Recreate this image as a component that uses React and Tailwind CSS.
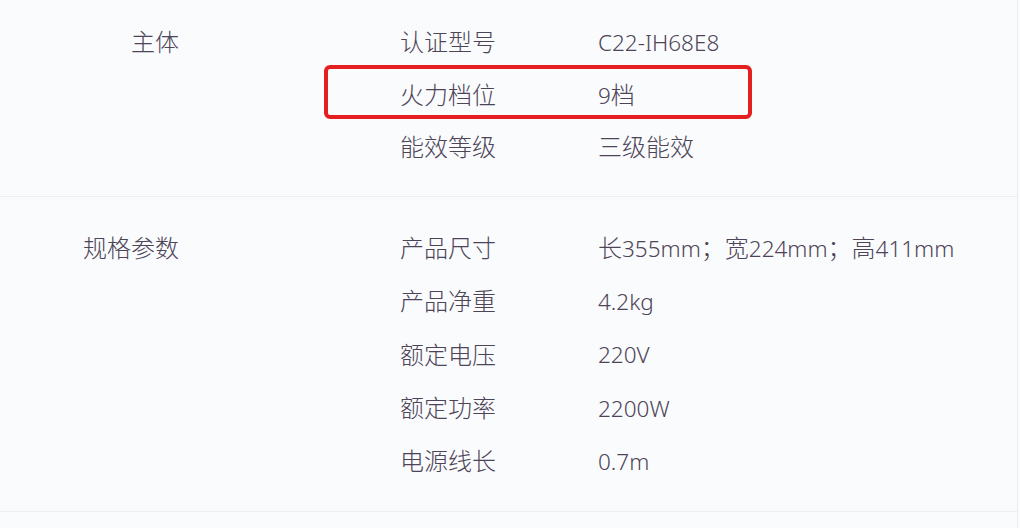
import React from "react";

const font = { fontFamily: '"Noto Sans", "Noto Sans CJK SC", sans-serif' };

function Txt({ s }) {
  const parts = s.split(/([\u0000-\u00ff]+)/).filter(Boolean);
  return (
    <span>
      {parts.map((p, i) =>
        /^[\u0000-\u00ff]+$/.test(p) ? (
          <span key={i} className="text-[22.5px]">
            {p}
          </span>
        ) : (
          <span key={i}>{p}</span>
        )
      )}
    </span>
  );
}

function Row({ label, value, highlight, h }) {
  return (
    <div className={"relative flex items-center " + h}>
      {highlight && (
        <div className="absolute left-[-76px] top-[-4px] h-[54px] w-[428px] rounded-[6px] border-[4px] border-[#e3201f]" />
      )}
      <div className="w-[198px] shrink-0">{label}</div>
      <div>
        <Txt s={value} />
      </div>
    </div>
  );
}

function Section({ title, rows, className, h }) {
  return (
    <div className={"flex border-b border-[#eceef3] " + className}>
      <div className="w-[179px] shrink-0 text-right">
        <div className={"flex items-center justify-end " + h}>{title}</div>
      </div>
      <div className="ml-[221px] flex flex-col">
        {rows.map((r) => (
          <Row key={r[0]} label={r[0]} value={r[1]} highlight={r[2]} h={h} />
        ))}
      </div>
    </div>
  );
}

export default function App() {
  return (
    <div
      className="h-[528px] w-[1020px] overflow-hidden bg-[#fafbfd] text-[24px] font-light leading-none text-[#4d4457]"
      style={font}
    >
      <div className="h-[528px] w-[1018px] border-r border-[#eceef3]">
        <Section
          className="pt-[16px] pb-[22.5px]"
          h="h-[52.5px]"
          title="主体"
          rows={[
            ["认证型号", "C22-IH68E8"],
            ["火力档位", "9档", true],
            ["能效等级", "三级能效"],
          ]}
        />
        <Section
          className="pt-[24.5px] pb-[23px]"
          h="h-[53.25px]"
          title="规格参数"
          rows={[
            ["产品尺寸", "长355mm；宽224mm；高411mm"],
            ["产品净重", "4.2kg"],
            ["额定电压", "220V"],
            ["额定功率", "2200W"],
            ["电源线长", "0.7m"],
          ]}
        />
      </div>
    </div>
  );
}
